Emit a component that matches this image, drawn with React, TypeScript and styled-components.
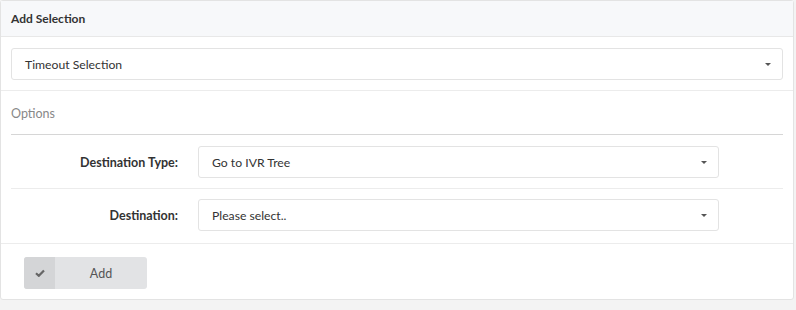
import React from 'react';
import styled, {createGlobalStyle} from "styled-components";

const GlobalStyle = createGlobalStyle`
    html, body {
        margin:0;
        padding:0;
        background:#f3f3f3;
        font-family: Lato, "Open Sans", sans-serif;
    }
`;

const Panel = styled.div`
    width:794px;
    box-sizing:border-box;
    background:#fff;
    border:1px solid #e3e3e3;
    border-radius:3px;
    margin-bottom:10px;
`;

const Head = styled.div`
    height:35px;
    display:flex;
    align-items:center;
    padding:0 10px;
    background:#f7f8fa;
    border-bottom:1px solid #e8e8e8;
    font-size:12px;
    font-weight:700;
    color:#333;
`;

const Section = styled.div`
    padding:11px 10px 10px;
    border-bottom:1px solid #ececec;
`;

const SelectBox = styled.div`
    height:32px;
    box-sizing:border-box;
    width:100%;
    display:flex;
    align-items:center;
    justify-content:space-between;
    padding:0 11px 0 13px;
    border:1px solid #e3e3e3;
    border-radius:3px;
    background:#fff;
    font-size:12.2px;
    color:#333;
`;

const Caret = styled.span`
    width:0;
    height:0;
    border-left:3px solid transparent;
    border-right:3px solid transparent;
    border-top:3.5px solid #555;
`;

const Options = styled.div`
    padding:0 10px;
`;

const Legend = styled.div`
    height:44px;
    display:flex;
    align-items:center;
    padding-top:2px;
    box-sizing:border-box;
    border-bottom:1px solid #d6d6d6;
    font-size:12.5px;
    color:#888;
`;

const Row = styled.div<{last?: boolean}>`
    display:grid;
    grid-template-columns:167px 521px;
    column-gap:20px;
    align-items:center;
    padding:${({last}) => last ? '10px 0 12px' : '11px 0 10px'};
    border-bottom:${({last}) => last ? 'none' : '1px solid #ececec'};
`;

const Label = styled.label`
    text-align:right;
    font-size:12.5px;
    font-weight:700;
    color:#333;
`;

const Footer = styled.div`
    padding:13px 23px 10px;
    border-top:1px solid #ececec;
`;

const Button = styled.button`
    display:flex;
    align-items:stretch;
    width:123px;
    height:32px;
    padding:0;
    border:none;
    border-radius:3px;
    overflow:hidden;
    background:#e2e3e5;
    font-family:inherit;
    font-size:12.5px;
    color:#555;
`;

const IconPart = styled.span`
    width:31px;
    display:flex;
    align-items:center;
    justify-content:center;
    background:#d4d5d7;
`;

const ButtonText = styled.span`
    flex:1;
    display:flex;
    align-items:center;
    justify-content:center;
`;

const Check = () => (
    <svg width="10" height="8" viewBox="0 0 10 8">
        <path d="M1 4.2 L3.8 6.8 L9 1.5" fill="none" stroke="#666" strokeWidth="2.2" />
    </svg>
);

const App = () => {
    return (
        <>
            <GlobalStyle/>
            <Panel>
                <Head>Add Selection</Head>
                <Section>
                    <SelectBox>
                        Timeout Selection
                        <Caret/>
                    </SelectBox>
                </Section>
                <Options>
                    <Legend>Options</Legend>
                    <Row>
                        <Label>Destination Type:</Label>
                        <SelectBox>
                            Go to IVR Tree
                            <Caret/>
                        </SelectBox>
                    </Row>
                    <Row last>
                        <Label>Destination:</Label>
                        <SelectBox>
                            Please select..
                            <Caret/>
                        </SelectBox>
                    </Row>
                </Options>
                <Footer>
                    <Button>
                        <IconPart><Check/></IconPart>
                        <ButtonText>Add</ButtonText>
                    </Button>
                </Footer>
            </Panel>
        </>
    );
};

export default App;
